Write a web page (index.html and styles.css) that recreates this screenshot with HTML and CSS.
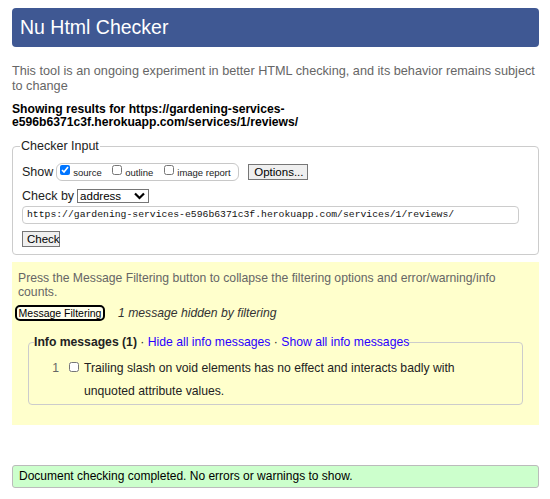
FILE: index.html
```html
<!DOCTYPE html>
<html>
<head>
<meta charset="utf-8">
<link rel="stylesheet" href="styles.css">
</head>
<body>
<header class="banner"><h1>Nu Html Checker</h1></header>
<p class="intro">This tool is an ongoing experiment in better HTML checking, and its behavior remains subject to change</p>
<p class="showing">Showing results for https://gardening-services-<br>e596b6371c3f.herokuapp.com/services/1/reviews/</p>
<fieldset class="input-box">
  <legend>Checker Input</legend>
  <div class="row show-row">
    <span class="lbl">Show</span>
    <span class="opts">
      <label class="opt"><input type="checkbox" checked> source</label>
      <label class="opt"><input type="checkbox"> outline</label>
      <label class="opt"><input type="checkbox"> image report</label>
    </span>
    <button class="btn opt-btn">Options...</button>
  </div>
  <div class="row by-row">
    <span class="lbl">Check by</span>
    <span class="select">address
      <svg width="11" height="8" viewBox="0 0 11 8"><path d="M1 1.5 L5.5 6 L10 1.5" fill="none" stroke="#000" stroke-width="2.2"/></svg>
    </span>
  </div>
  <div class="url">https://gardening-services-e596b6371c3f.herokuapp.com/services/1/reviews/</div>
  <button class="btn check-btn">Check</button>
</fieldset>
<section class="filters">
  <p class="press">Press the Message Filtering button to collapse the filtering options and error/warning/info counts.</p>
  <div class="filter-row">
    <button class="mf-btn">Message Filtering</button>
    <span class="hidden-note">1 message hidden by filtering</span>
  </div>
  <fieldset class="info-box">
    <legend><b>Info messages (1)</b> · <a href="#">Hide all info messages</a> · <a href="#">Show all info messages</a></legend>
    <div class="msg">
      <span class="num">1</span>
      <input type="checkbox" class="msg-cb">
      <span class="msg-text">Trailing slash on void elements has no effect and interacts badly with unquoted attribute values.</span>
    </div>
  </fieldset>
</section>
<p class="success">Document checking completed. No errors or warnings to show.</p>
</body>
</html>
```
FILE: styles.css
```css
* { box-sizing: border-box; }
body {
  margin: 0;
  padding: 8px 11px 0 12px;
  font-family: Arial, "Liberation Sans", sans-serif;
  color: #000;
  background: #fff;
}
.banner {
  background: #3f5893;
  border-radius: 4px;
  height: 39px;
  display: flex;
  align-items: center;
  padding-left: 8px;
}
.banner h1 {
  margin: 0;
  color: #fff;
  font-weight: normal;
  font-size: 19.5px;
}
.intro {
  margin: 17px 0 0;
  color: #666;
  font-size: 12.7px;
  line-height: 15px;
}
.showing {
  margin: 9px 0 0;
  font-weight: bold;
  font-size: 12.15px;
  line-height: 13px;
}
.input-box {
  margin: 10px 0 0;
  border: 1px solid #ccc;
  border-radius: 4px;
  padding: 9px 19px 8px 9px;
  height: 116px;
}
.input-box legend {
  font-size: 12.5px;
  color: #222;
  padding: 0 1px;
  margin-left: -2px;
}
.row {
  display: flex;
  align-items: center;
  font-size: 12.5px;
  color: #222;
}
.show-row { height: 18px; margin-top: 1px; }
.lbl { margin-right: 3px; }
.opts {
  display: flex;
  align-items: center;
  border: 1px solid #c8c8c8;
  border-radius: 6px;
  height: 18px;
  padding: 0 5px 0 3px;
  width: 183px;
}
.opt {
  font-size: 9.5px;
  display: flex;
  align-items: center;
  color: #222;
}
.opt:nth-child(1) { width: 52px; }
.opt:nth-child(2) { width: 52px; }
.opt input {
  margin: 0 3px 0 0;
  width: 10px;
  height: 10px;
  position: relative;
  top: -2px;
}
.btn {
  font-family: Arial, "Liberation Sans", sans-serif;
  font-size: 11.5px;
  background: #efefef;
  border: 1px solid #767676;
  border-radius: 0;
  color: #000;
  padding: 0 5px;
  height: 16px;
  line-height: 14px;
}
.opt-btn { margin-left: 9px; width: 60px; }
.by-row { height: 14px; margin-top: 8px; }
.select {
  display: flex;
  align-items: center;
  justify-content: space-between;
  width: 72px;
  height: 14px;
  border: 1px solid #767676;
  font-size: 11.5px;
  color: #000;
  padding: 0 3px 0 2px;
}
.url {
  margin-top: 3px;
  height: 18px;
  width: 497px;
  border: 1px solid #ccc;
  border-radius: 4px;
  font-family: "Liberation Mono", monospace;
  font-size: 9.75px;
  line-height: 16px;
  padding-left: 4px;
  color: #111;
}
.check-btn {
  margin-top: 7px;
  width: 38px;
  display: block;
  font-size: 11.5px;
  padding: 0 4px;
}
.filters {
  margin-top: 7px;
  background: #ffffcc;
  height: 163px;
  padding: 9px 3px 0 6px;
}
.press {
  margin: 0;
  color: #666;
  font-size: 12.2px;
  line-height: 14px;
}
.filter-row {
  display: flex;
  align-items: center;
  margin: 6px 0 0 -3px;
  height: 16px;
}
.mf-btn {
  font-family: Arial, "Liberation Sans", sans-serif;
  font-size: 10.5px;
  background: #ffffee;
  border: 2px solid #000;
  border-radius: 5px;
  height: 16px;
  width: 90px;
  padding: 0;
  line-height: 12px;
  color: #000;
}
.hidden-note {
  font-style: italic;
  color: #333;
  font-size: 12.2px;
  margin-left: 13px;
}
.info-box {
  margin: 14px 13px 0 10px;
  border: 1px solid #ccc;
  border-radius: 4px;
  padding: 0 0 8px 0;
  height: 70px;
}
.info-box legend {
  font-size: 12.2px;
  color: #222;
  padding: 0;
  margin-left: 5px;
}
.info-box a { color: #2a00ff; text-decoration: none; }
.msg {
  display: flex;
  align-items: flex-start;
  margin-top: 8px;
}
.num {
  width: 30px;
  text-align: right;
  color: #666;
  font-size: 12.2px;
  line-height: 23px;
}
.msg-cb {
  margin: 5px 0 0 10px;
  width: 10px;
  height: 10px;
}
.msg-text {
  margin-left: 5px;
  font-size: 12.2px;
  line-height: 23px;
  color: #222;
  width: 420px;
}
.success {
  margin: 40px 0 0;
  background: #ccffcc;
  border: 1px solid #bbb;
  border-radius: 3px;
  height: 23px;
  line-height: 21px;
  padding-left: 6px;
  font-size: 12px;
  color: #000;
}
```
